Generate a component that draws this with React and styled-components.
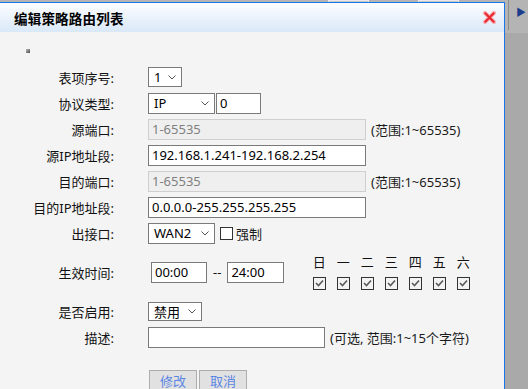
import React from "react";
import styled, { createGlobalStyle } from "styled-components";

const GlobalStyle = createGlobalStyle`
  html, body {
    margin: 0;
    padding: 0;
  }
  body {
    width: 528px;
    height: 389px;
    overflow: hidden;
    background: #a9a9a9;
    font-family: "Noto Sans", "Noto Sans CJK SC", sans-serif;
  }
`;

const Page = styled.div`
  position: relative;
  width: 528px;
  height: 389px;
  overflow: hidden;
  background: #a9a9a9;
`;

const TopBar = styled.div`
  height: 33px;
  display: flex;
  align-items: flex-start;
  padding-left: 328px;
  gap: 49px;
  background: #b4b4b4;
`;

const GhostButton = styled.div`
  width: 47px;
  height: 22px;
  box-sizing: border-box;
  border: 1px solid #e8e8e8;
  background: #c9c9c9;
`;

const TopTool = styled.div`
  margin-left: auto;
  width: 23px;
  height: 30px;
  display: flex;
  align-items: flex-start;
  justify-content: flex-end;
  padding: 4px 2px 0 0;
  box-sizing: border-box;
  border-left: 1px solid #8c8c8c;
  color: #1c3c8c;
  font-size: 10px;
`;

const Dialog = styled.section`
  position: absolute;
  top: 2px;
  left: -1px;
  bottom: 0;
  width: 506px;
  box-sizing: border-box;
  border: 1px solid #1a76e8;
  border-bottom: none;
  background: #f4f4f4;
  display: flex;
  flex-direction: column;
`;

const Header = styled.header`
  height: 29px;
  flex: none;
  display: flex;
  align-items: center;
  justify-content: space-between;
  padding: 0 8px 0 14px;
  background: linear-gradient(#fcfdff, #d9e8f8);
`;

const Title = styled.h1`
  margin: 0;
  font-family: "Noto Sans CJK SC", sans-serif;
  font-size: 13.5px;
  font-weight: 700;
  color: #000;
  letter-spacing: 0.2px;
`;

const CloseButton = styled.span`
  display: flex;
  width: 13px;
  height: 13px;
  cursor: pointer;
`;

const Body = styled.div`
  flex: 1;
  display: flex;
  flex-direction: column;
`;

const Broken = styled.span`
  width: 4px;
  height: 4px;
  margin: 17px 0 11px 26px;
  background: linear-gradient(135deg, #bcbcbc, #4a4a4a);
`;

const Form = styled.div`
  display: flex;
  flex-direction: column;
`;

const Row = styled.div`
  display: grid;
  grid-template-columns: 114px 1fr;
  column-gap: 34px;
  align-items: center;
  height: ${(p) => p.$h || 26}px;
`;

const Label = styled.label`
  text-align: right;
  white-space: nowrap;
  font-size: 13px;
  color: #111;
`;

const Field = styled.div`
  display: flex;
  align-items: center;
  gap: ${(p) => p.$gap ?? 0}px;
  font-size: 13px;
  color: #111;
`;

const SelectBox = styled.div`
  width: ${(p) => p.$w}px;
  height: ${(p) => p.$h || 21}px;
  box-sizing: border-box;
  border: 1px solid #7a7a7a;
  background: #fff;
  display: flex;
  align-items: center;
  justify-content: space-between;
  padding: 0 5px 0 5px;
  font-size: 13px;
  color: #000;
`;

const Input = styled.input`
  width: ${(p) => p.$w}px;
  height: 21px;
  box-sizing: border-box;
  margin: 0;
  margin-left: ${(p) => p.$ml || 0}px;
  padding: 0 3px;
  border: 1px solid ${(p) => (p.disabled ? "#cfcfcf" : "#7a7a7a")};
  background: ${(p) => (p.disabled ? "#efefef" : "#fff")};
  color: ${(p) => (p.disabled ? "#808080" : "#000")};
  font-family: "Noto Sans", "Noto Sans CJK SC", sans-serif;
  font-size: 13px;
  outline: none;
`;

const Hint = styled.span`
  font-size: 13px;
  color: #1a1a1a;
  white-space: nowrap;
`;

const Box = styled.span`
  width: 13px;
  height: 13px;
  box-sizing: border-box;
  border: 1px solid #333;
  background: ${(p) => (p.$checked ? "#f3f3f3" : "#fff")};
  display: flex;
  align-items: center;
  justify-content: center;
  margin-left: ${(p) => p.$ml || 0}px;
`;

const Dash = styled.span`
  font-size: 13px;
  color: #111;
`;

const Week = styled.div`
  margin-left: 17px;
  display: grid;
  grid-template-columns: repeat(7, 24px);
  grid-template-rows: 14px 13px;
  row-gap: 8px;
  justify-items: center;
  align-items: center;
`;

const Day = styled.span`
  font-family: "Noto Sans CJK SC", sans-serif;
  font-size: 13px;
  line-height: 14px;
  color: #111;
`;

const Buttons = styled.div`
  display: flex;
  gap: 2px;
  padding-left: 149px;
  margin-top: 20px;
`;

const Button = styled.button`
  width: 48px;
  height: 22px;
  box-sizing: border-box;
  border: 1px solid #adadad;
  background: #e1e1e1;
  color: #5b86e4;
  font-family: "Noto Sans CJK SC", sans-serif;
  font-size: 13px;
  line-height: 18px;
  padding: 0;
`;

const Chevron = () => (
  <svg width="8" height="5" viewBox="0 0 8 5">
    <path d="M0.5 0.5 L4 4 L7.5 0.5" stroke="#555" strokeWidth="1" fill="none" />
  </svg>
);

const Check = () => (
  <svg width="9" height="8" viewBox="0 0 9 8">
    <path d="M1 4 L3.5 6.5 L8 1.5" stroke="#5a5a5a" strokeWidth="1.6" fill="none" />
  </svg>
);

const CloseIcon = () => (
  <svg width="13" height="13" viewBox="0 0 13 13">
    <path d="M2 2 L11 11 M11 2 L2 11" stroke="#f7aab0" strokeWidth="4" strokeLinecap="round" />
    <path d="M2.3 2.3 L10.7 10.7 M10.7 2.3 L2.3 10.7" stroke="#e8262e" strokeWidth="2" strokeLinecap="round" />
  </svg>
);

const Select = ({ w, h, children }) => (
  <SelectBox $w={w} $h={h}>
    <span>{children}</span>
    <Chevron />
  </SelectBox>
);

const days = ["日", "一", "二", "三", "四", "五", "六"];

export default function App() {
  return (
    <Page>
      <GlobalStyle />
      <TopBar>
        <GhostButton />
        <GhostButton />
        <TopTool>▶</TopTool>
      </TopBar>
      <Dialog>
        <Header>
          <Title>编辑策略路由列表</Title>
          <CloseButton>
            <CloseIcon />
          </CloseButton>
        </Header>
        <Body>
          <Broken />
          <Form>
            <Row>
              <Label>表项序号:</Label>
              <Field>
                <Select w={34} h={20}>1</Select>
              </Field>
            </Row>
            <Row>
              <Label>协议类型:</Label>
              <Field $gap={1}>
                <Select w={67}>IP</Select>
                <Input $w={45} defaultValue="0" />
              </Field>
            </Row>
            <Row>
              <Label>源端口:</Label>
              <Field $gap={5}>
                <Input $w={218} disabled defaultValue="1-65535" />
                <Hint>(范围:1~65535)</Hint>
              </Field>
            </Row>
            <Row>
              <Label>源IP地址段:</Label>
              <Field>
                <Input $w={218} defaultValue="192.168.1.241-192.168.2.254" />
              </Field>
            </Row>
            <Row>
              <Label>目的端口:</Label>
              <Field $gap={5}>
                <Input $w={218} disabled defaultValue="1-65535" />
                <Hint>(范围:1~65535)</Hint>
              </Field>
            </Row>
            <Row>
              <Label>目的IP地址段:</Label>
              <Field>
                <Input $w={218} defaultValue="0.0.0.0-255.255.255.255" />
              </Field>
            </Row>
            <Row>
              <Label>出接口:</Label>
              <Field $gap={3}>
                <Select w={67}>WAN2</Select>
                <Box $ml={2} />
                <Hint>强制</Hint>
              </Field>
            </Row>
            <Row $h={52}>
              <Label>生效时间:</Label>
              <Field $gap={6}>
                <Input $w={56} $ml={3} defaultValue="00:00" />
                <Dash>--</Dash>
                <Input $w={57} defaultValue="24:00" />
                <Week>
                  {days.map((d) => (
                    <Day key={d}>{d}</Day>
                  ))}
                  {days.map((d) => (
                    <Box key={"c" + d} $checked>
                      <Check />
                    </Box>
                  ))}
                </Week>
              </Field>
            </Row>
            <Row>
              <Label>是否启用:</Label>
              <Field>
                <Select w={54} h={19}>禁用</Select>
              </Field>
            </Row>
            <Row>
              <Label>描述:</Label>
              <Field $gap={5}>
                <Input $w={177} defaultValue="" />
                <Hint>(可选, 范围:1~15个字符)</Hint>
              </Field>
            </Row>
          </Form>
          <Buttons>
            <Button>修改</Button>
            <Button>取消</Button>
          </Buttons>
        </Body>
      </Dialog>
    </Page>
  );
}
